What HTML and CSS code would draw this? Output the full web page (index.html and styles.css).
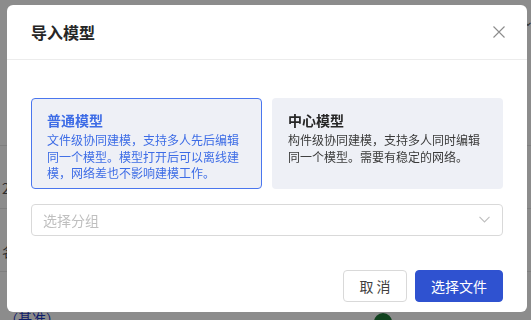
FILE: index.html
```html
<!DOCTYPE html>
<html lang="zh-CN">
<head>
    <meta charset="UTF-8">
    <meta name="viewport" content="width=device-width, initial-scale=1.0">
    <title>导入模型</title>
    <link rel="stylesheet" href="styles.css">
</head>
<body>
    <!-- page behind the dialog -->
    <div class="page">
        <div class="page-top">
            <span class="top-caret">⌄</span>
        </div>
        <div class="row"><span class="row-cell">2</span></div>
        <div class="row"><span class="row-cell">名</span></div>
        <div class="row row-last">
            <span class="tag">（基准）</span>
            <span class="avatar"></span>
        </div>
    </div>

    <div class="mask"></div>

    <div class="modal">
        <div class="modal-header">
            <h2 class="modal-title">导入模型</h2>
            <button class="close-btn" aria-label="关闭">
                <svg width="12" height="12" viewBox="0 0 12 12">
                    <path d="M0.5 0.5 L11.5 11.5 M11.5 0.5 L0.5 11.5" stroke="#8c8c8c" stroke-width="1.1" fill="none"/>
                </svg>
            </button>
        </div>

        <div class="modal-body">
            <div class="mode-list">
                <div class="mode-card active">
                    <div class="mode-title">普通模型</div>
                    <p class="mode-desc">文件级协同建模，支持多人先后编辑同一个模型。模型打开后可以离线建模，网络差也不影响建模工作。</p>
                </div>
                <div class="mode-card">
                    <div class="mode-title">中心模型</div>
                    <p class="mode-desc">构件级协同建模，支持多人同时编辑同一个模型。需要有稳定的网络。</p>
                </div>
            </div>

            <div class="select">
                <span class="placeholder">选择分组</span>
                <svg class="arrow" width="11" height="7" viewBox="0 0 11 7">
                    <path d="M0.5 0.8 L5.5 6 L10.5 0.8" stroke="#bfbfbf" stroke-width="1.1" fill="none"/>
                </svg>
            </div>
        </div>

        <div class="modal-footer">
            <button class="btn">取 消</button>
            <button class="btn btn-primary">选择文件</button>
        </div>
    </div>
</body>
</html>
```

FILE: styles.css
```css
:root {
    --primary: #2f52d0;
    --card-bg: #eef0f6;
    --active-border: #4a76ee;
    --active-text: #3d6ce6;
    --text: #262626;
    --border: #d9d9d9;
}

* {
    box-sizing: border-box;
    margin: 0;
    padding: 0;
}

body {
    font-family: "Noto Sans CJK SC", "Noto Sans", sans-serif;
    color: var(--text);
    background: #fff;
    width: 531px;
    height: 320px;
    overflow: hidden;
}

/* background page */
.page {
    height: 320px;
}

.page-top {
    height: 145px;
    display: flex;
    justify-content: flex-end;
    padding: 10px 0 0 0;
}

.top-caret {
    font-size: 14px;
    color: #666;
    margin-right: -3px;
}

.row {
    height: 63px;
    border-top: 1px solid #e8e8e8;
    display: flex;
    align-items: flex-end;
    padding-bottom: 10px;
    font-size: 14px;
    color: #555;
}

.row-cell {
    padding-left: 2px;
}

.row-last {
    border-top: 1px solid #e8e8e8;
    align-items: flex-start;
    padding-top: 38px;
    padding-left: 4px;
    gap: 314px;
}

.tag {
    font-size: 14px;
    color: #1d39c4;
    line-height: 16px;
}

.avatar {
    width: 18px;
    height: 18px;
    border-radius: 50%;
    background: #1f7a3a;
    margin-top: 3px;
}

.mask {
    position: fixed;
    inset: 0;
    background: rgba(0, 0, 0, 0.45);
}

/* dialog */
.modal {
    position: fixed;
    left: 7px;
    top: 5px;
    width: 520px;
    height: 307px;
    background: #fff;
    border-radius: 6px;
    display: flex;
    flex-direction: column;
}

.modal-header {
    height: 55px;
    border-bottom: 1px solid #ececec;
    display: flex;
    align-items: center;
    justify-content: space-between;
    padding: 0 22px 0 24px;
}

.modal-title {
    font-size: 16px;
    font-weight: 600;
    color: var(--text);
    line-height: 22px;
}

.close-btn {
    border: none;
    background: none;
    width: 12px;
    height: 12px;
    display: flex;
    cursor: pointer;
}

.modal-body {
    padding: 38px 24px 0;
    flex: 1;
}

.mode-list {
    display: grid;
    grid-template-columns: 1fr 1fr;
    gap: 10px;
}

.mode-card {
    background: var(--card-bg);
    border: 1px solid transparent;
    border-radius: 4px;
    padding: 11px 15px 6px;
    font-size: 12px;
    color: #3a3a3a;
}

.mode-card.active {
    border-color: var(--active-border);
    color: var(--active-text);
}

.mode-title {
    font-size: 14px;
    font-weight: 700;
    line-height: 20px;
    margin-bottom: 2px;
    color: var(--text);
}

.mode-card.active .mode-title {
    color: var(--active-text);
}

.mode-desc {
    line-height: 16.5px;
}

.select {
    margin-top: 15px;
    height: 32px;
    border: 1px solid var(--border);
    border-radius: 4px;
    display: flex;
    align-items: center;
    justify-content: space-between;
    padding: 0 12px 0 11px;
}

.placeholder {
    font-size: 14px;
    color: #bfbfbf;
}

.modal-footer {
    display: flex;
    justify-content: flex-end;
    gap: 8px;
    padding: 0 24px 10px;
}

.btn {
    font-family: inherit;
    height: 32px;
    padding: 0 15px;
    font-size: 14px;
    border: 1px solid var(--border);
    border-radius: 4px;
    background: #fff;
    color: #404040;
    width: 64px;
}

.btn-primary {
    width: 88px;
    background: var(--primary);
    border-color: var(--primary);
    color: #fff;
}
```
